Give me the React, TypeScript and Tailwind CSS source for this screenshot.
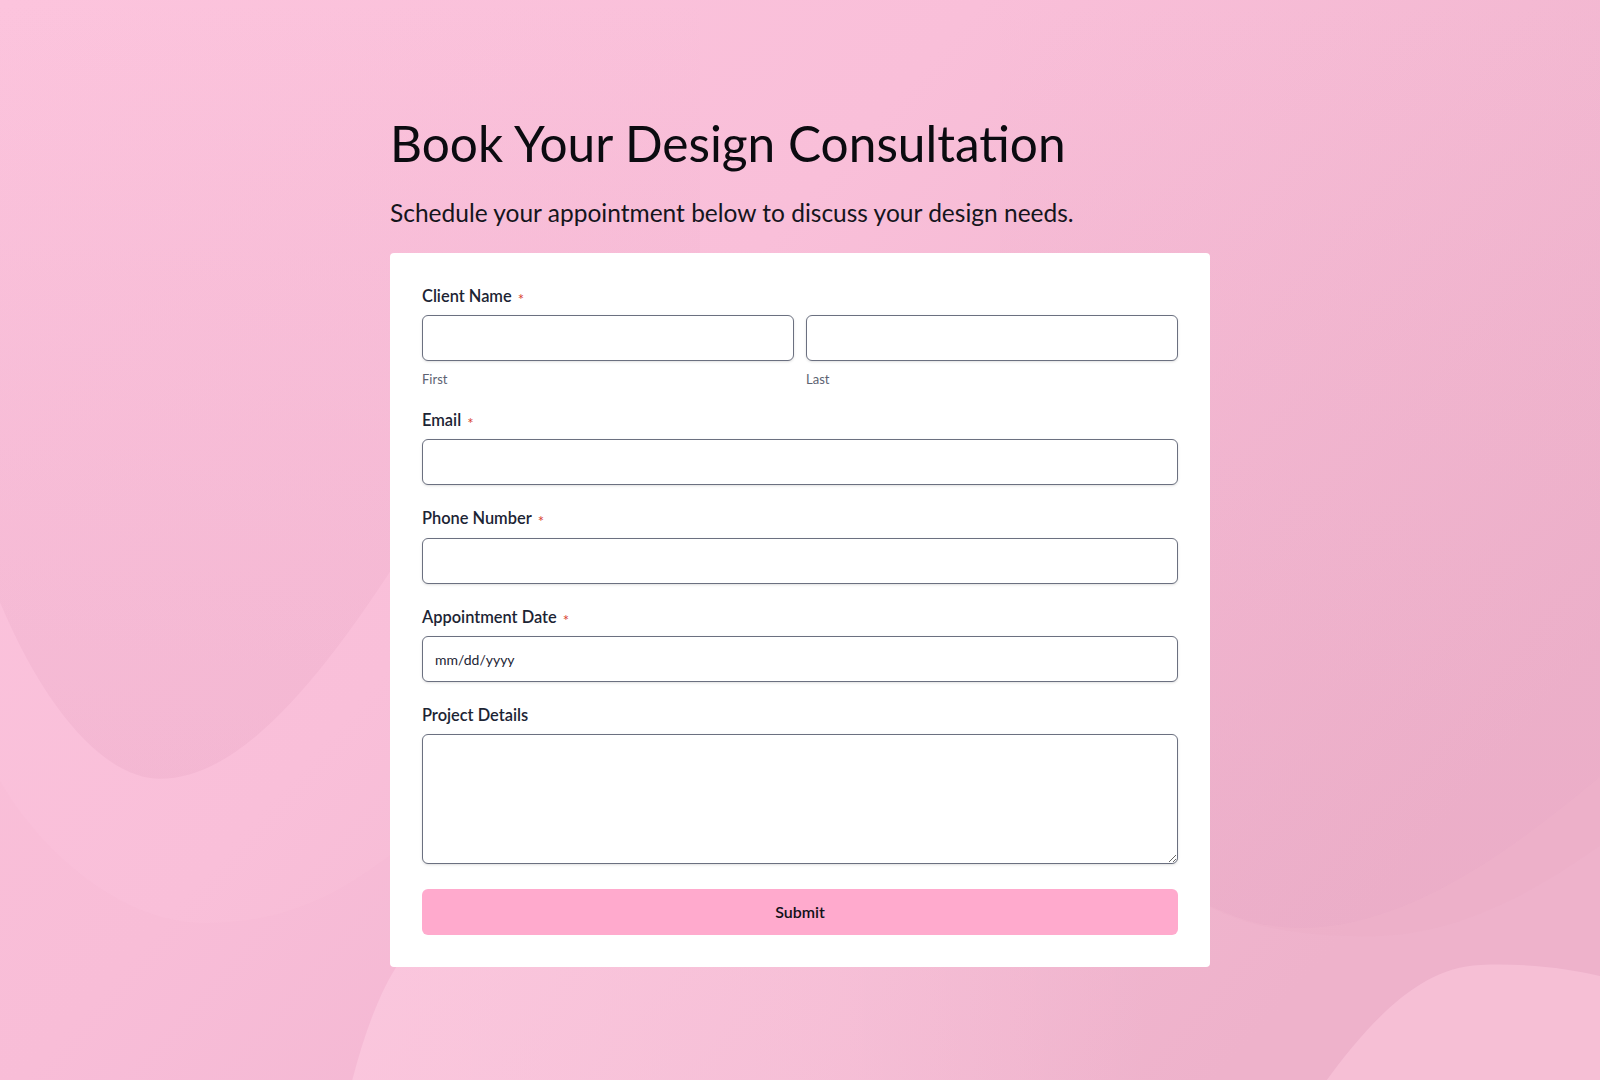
import React from "react";

function Background() {
  return (
    <svg
      className="absolute inset-0 h-full w-full"
      viewBox="0 0 1600 1080"
      preserveAspectRatio="none"
      aria-hidden="true"
    >
      <defs>
        <linearGradient id="bg" x1="0" y1="0" x2="1" y2="0.6">
          <stop offset="0" stopColor="#fcc4dd" />
          <stop offset="0.45" stopColor="#f9bfd9" />
          <stop offset="1" stopColor="#eeb2cb" />
        </linearGradient>
        <linearGradient id="fadeDown" x1="0" y1="0" x2="0" y2="1">
          <stop offset="0" stopColor="#e3a0bf" stopOpacity="0" />
          <stop offset="0.35" stopColor="#e3a0bf" stopOpacity="0.1" />
          <stop offset="1" stopColor="#e3a0bf" stopOpacity="0.25" />
        </linearGradient>
        <linearGradient id="fadeRight" x1="0" y1="0" x2="1" y2="0">
          <stop offset="0" stopColor="#ffd2e5" stopOpacity="0.5" />
          <stop offset="0.6" stopColor="#ffd2e5" stopOpacity="0.3" />
          <stop offset="1" stopColor="#ffd2e5" stopOpacity="0" />
        </linearGradient>
      </defs>
      <rect width="1600" height="1080" fill="url(#bg)" />
      {/* left blob */}
      <path
        d="M0 0 L0 602 C50 720 110 778 160 778 C240 778 320 680 400 556 L700 260 L700 0 Z"
        fill="url(#fadeDown)"
      />
      <path
        d="M0 780 C40 850 120 920 200 922 C300 924 360 880 420 830 L420 1080 L0 1080 Z"
        fill="#e9a3c1"
        fillOpacity="0.05"
      />
      {/* right blob */}
      <path
        d="M1000 0 L1600 0 L1600 776 C1500 860 1400 927 1300 927 C1260 927 1230 915 1200 900 L1000 700 Z"
        fill="url(#fadeDown)"
      />
      <path
        d="M1200 900 C1240 925 1300 937 1380 935 C1470 932 1550 880 1600 845 L1600 776 C1500 860 1400 927 1300 927 C1260 927 1230 915 1200 900 Z"
        fill="#e3a0bf"
        fillOpacity="0.07"
      />
      {/* lighter blobs at the bottom */}
      <path
        d="M352 1080 C365 1030 380 990 400 960 L1150 960 L1150 1080 Z"
        fill="url(#fadeRight)"
      />
      <path
        d="M1326 1080 C1370 1020 1420 966 1480 964 C1530 962 1570 968 1600 975 L1600 1080 Z"
        fill="#ffcfe3"
        fillOpacity="0.45"
      />
    </svg>
  );
}

function Label({ text, required }: { text: string; required?: boolean }) {
  return (
    <label className="flex items-center text-[16.4px] font-semibold leading-6 text-[#1c2434]">
      {text}
      {required && (
        <span className="relative top-[3px] ml-[6px] text-[15px] font-normal text-[#d8432f]">*</span>
      )}
    </label>
  );
}

const inputCls =
  "block h-[46px] w-full rounded-md border border-[#6b7080] bg-white px-3 text-sm text-[#1c2434] shadow-sm outline-none";

export default function App() {
  return (
    <div
      className="relative min-h-[1080px] w-full overflow-hidden"
      style={{ fontFamily: "Lato, 'Noto Sans', sans-serif" }}
    >
      <Background />
      <div className="relative mx-auto w-[820px] pt-[119px] pb-[114px]">
        <h1 className="text-[49.6px] font-normal leading-none text-[#0b0b10]">
          Book Your Design Consultation
        </h1>
        <p className="mt-[28px] text-[24.5px] leading-8 text-[#15151c]">
          Schedule your appointment below to discuss your design needs.
        </p>

        <form
          className="mt-[24px] rounded bg-white px-8 pt-[31px] pb-8"
          onSubmit={(e) => e.preventDefault()}
        >
          {/* Client Name */}
          <div>
            <Label text="Client Name" required />
            <div className="mt-[7px] grid grid-cols-2 gap-3">
              <div>
                <input type="text" className={inputCls} />
                <div className="mt-2 text-[13px] leading-5 text-[#5c6272]">First</div>
              </div>
              <div>
                <input type="text" className={inputCls} />
                <div className="mt-2 text-[13px] leading-5 text-[#5c6272]">Last</div>
              </div>
            </div>
          </div>

          {/* Email */}
          <div className="mt-[19px]">
            <Label text="Email" required />
            <input type="email" className={`mt-[7.5px] ${inputCls}`} />
          </div>

          {/* Phone */}
          <div className="mt-[21px]">
            <Label text="Phone Number" required />
            <input type="tel" className={`mt-[7.5px] ${inputCls}`} />
          </div>

          {/* Date */}
          <div className="mt-[21px]">
            <Label text="Appointment Date" required />
            <input
              type="text"
              placeholder="mm/dd/yyyy"
              className={`mt-[7.5px] ${inputCls} placeholder:text-[#1c2434]`}
            />
          </div>

          {/* Project Details */}
          <div className="mt-[21px]">
            <Label text="Project Details" />
            <textarea className="mt-[7px] block h-[130px] w-full rounded-md border border-[#6b7080] bg-white px-3 py-2 text-sm shadow-sm outline-none" />
          </div>

          <button
            type="submit"
            className="mt-[25px] block h-[46px] w-full rounded-md bg-[#ffaacd] text-base font-semibold text-[#111118]"
          >
            Submit
          </button>
        </form>
      </div>
    </div>
  );
}
